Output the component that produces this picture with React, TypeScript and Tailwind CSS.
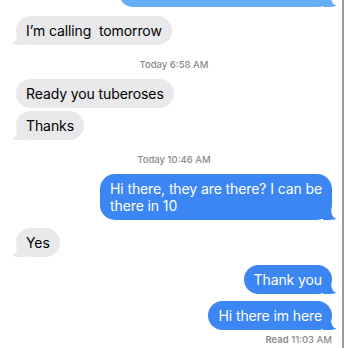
import React from "react";

type Msg =
  | { kind: "in" | "out"; lines: string[]; tail?: boolean; mt: number }
  | { kind: "time"; day: string; time: string };

const messages: Msg[] = [
  { kind: "in", lines: ["I\u2019m calling\u00a0 tomorrow"], tail: true, mt: 9 },
  { kind: "time", day: "Today", time: "6:58 AM" },
  { kind: "in", lines: ["Ready you tuberoses"], mt: 0 },
  { kind: "in", lines: ["Thanks"], tail: true, mt: 3 },
  { kind: "time", day: "Today", time: "10:46 AM" },
  { kind: "out", lines: ["Hi there, they are there? I can be", "there in 10"], tail: true, mt: 0 },
  { kind: "in", lines: ["Yes"], tail: true, mt: 8 },
  { kind: "out", lines: ["Thank you"], tail: true, mt: 8 },
  { kind: "out", lines: ["Hi there im here"], tail: true, mt: 7 },
];

function Tail({ side, color }: { side: "left" | "right"; color: string }) {
  // little curled tail at the bottom corner of a bubble
  if (side === "left") {
    return (
      <svg className="absolute -left-[5px] bottom-0" width="14" height="14" viewBox="0 0 14 14">
        <path d="M14 0 L14 14 C10 14 4 14 0 13 C4 12 6 9 6 2 Z" fill={color} />
      </svg>
    );
  }
  return (
    <svg className="absolute -right-[5px] bottom-0" width="14" height="14" viewBox="0 0 14 14">
      <path d="M0 0 L0 14 C4 14 10 14 14 13 C10 12 8 9 8 2 Z" fill={color} />
    </svg>
  );
}

function Row({ msg }: { msg: Msg }) {
  if (msg.kind === "time") {
    return (
      <div className="text-center text-[9.5px] leading-[12px] font-medium text-[#8a8a8e] pt-[14px] pb-[8px]">
        {msg.day} {msg.time}
      </div>
    );
  }
  const out = msg.kind === "out";
  const color = out ? "#3b86f2" : "#e9e9eb";
  const multi = msg.lines.length > 1;
  return (
    <div className={out ? "flex justify-end" : "flex justify-start"} style={{ marginTop: msg.mt }}>
      <div
        className={
          "relative rounded-[15px] px-[10px] text-[14px] tracking-[-0.1px] " +
          (multi ? "leading-[17.5px] py-[5.5px] " : "leading-[18px] py-[5.5px] ") +
          (out ? "bg-[#3b86f2] text-white" : "bg-[#e9e9eb] text-black")
        }
      >
        {msg.tail && <Tail side={out ? "right" : "left"} color={color} />}
        <span className="relative">
          {msg.lines.map((l, i) => (
            <React.Fragment key={i}>
              {i > 0 && <br />}
              {l}
            </React.Fragment>
          ))}
        </span>
      </div>
    </div>
  );
}

export default function App() {
  return (
    <div className="w-[348px] h-[348px] overflow-hidden bg-white flex" style={{ fontFamily: "Inter, 'Noto Sans', sans-serif" }}>
      <div className="flex-1 flex flex-col pl-4 pr-[10px]">
        {/* previous message, mostly scrolled away */}
        <div className="flex justify-end -mt-[21px]">
          <div className="relative w-[213px] h-[28px] rounded-[15px] bg-[#65aef6]">
            <Tail side="right" color="#65aef6" />
          </div>
        </div>
        {messages.map((m, i) => (
          <Row key={i} msg={m} />
        ))}
        <div className="text-right text-[9.5px] leading-[12px] font-medium text-[#8a8a8e] mt-[4px]">
          <span className="font-semibold">Read</span> 11:03 AM
        </div>
      </div>
      <div className="w-[2px] bg-[#9b9b9b]" />
      <div className="w-[4px]" />
    </div>
  );
}
